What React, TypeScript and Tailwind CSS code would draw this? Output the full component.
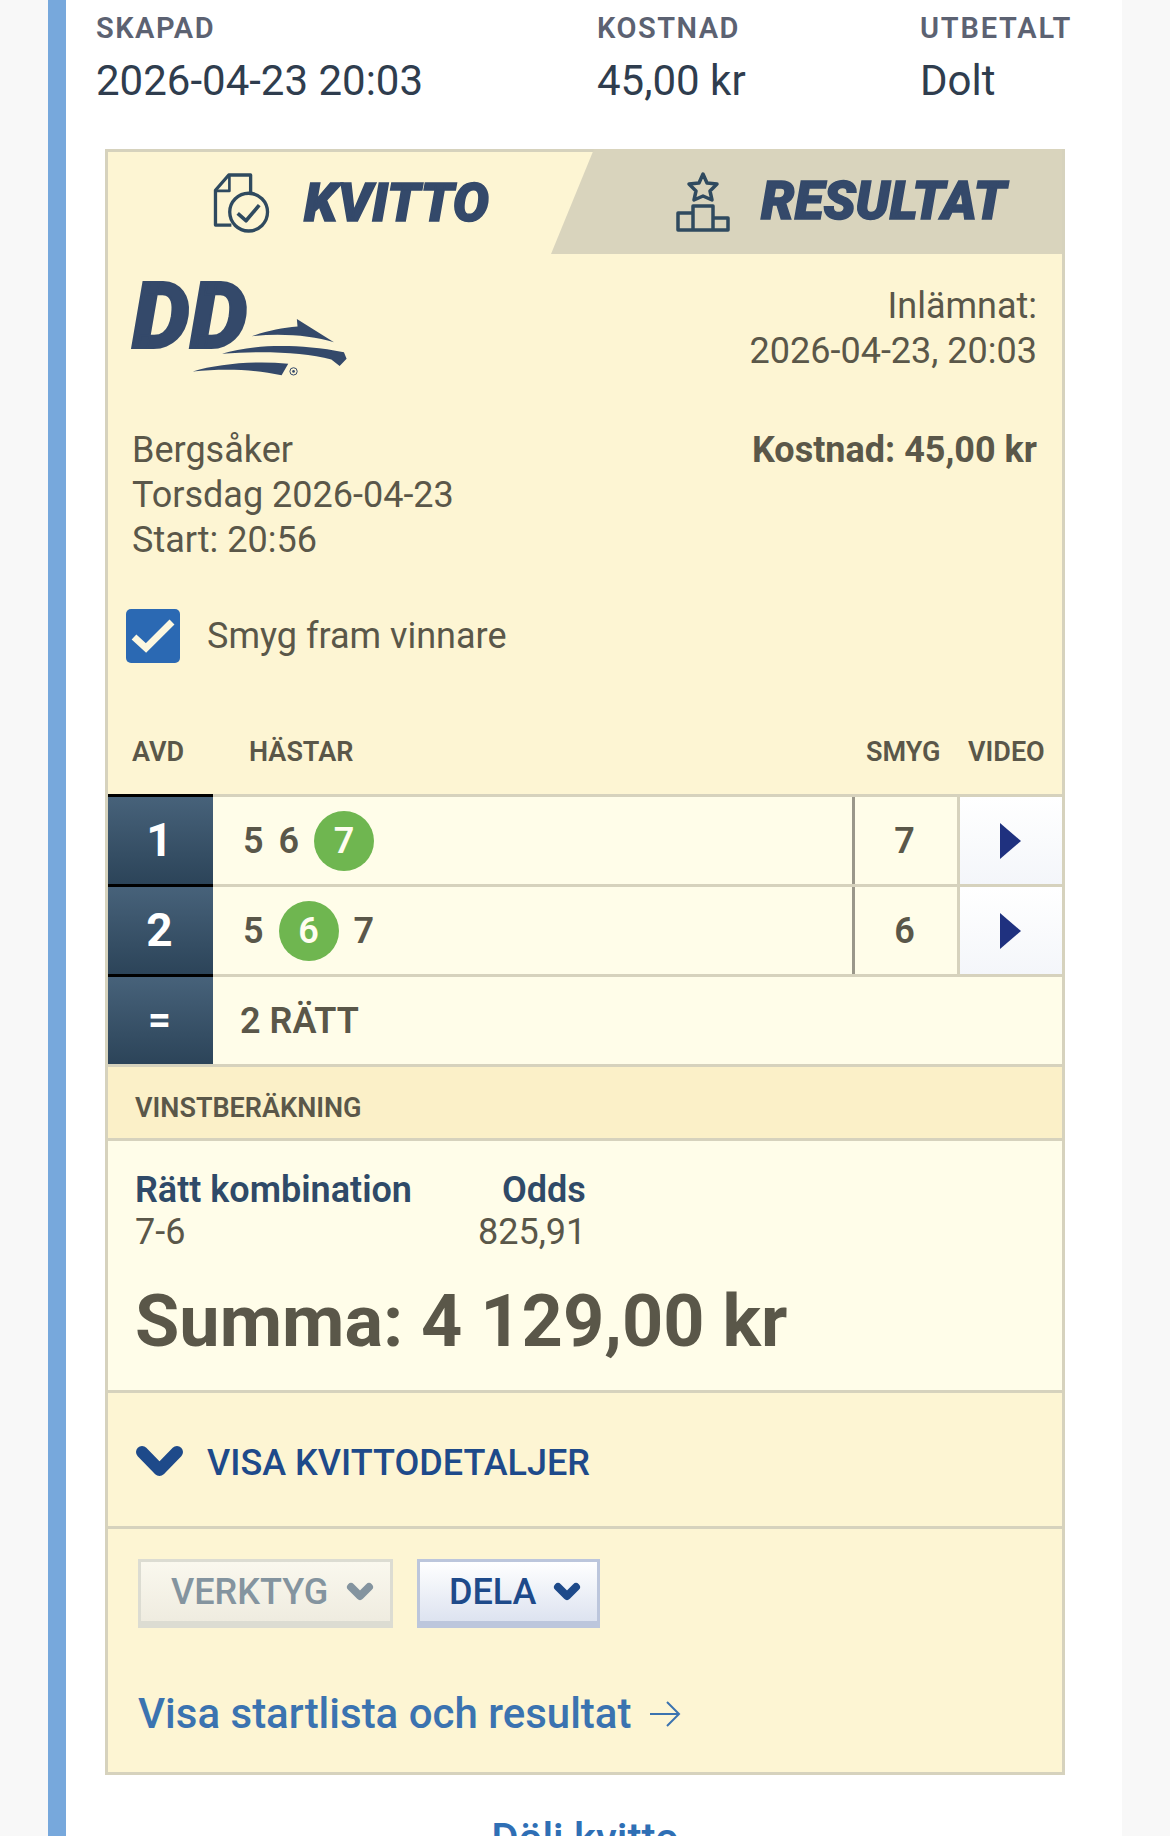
import React from 'react';

const line = 'border-[#d6d2bd]';

function Horses({ picks, winner }: { picks: number[]; winner: number }) {
  return (
    <div className="flex items-center gap-[15px] pl-[30px] text-[36px] font-semibold text-[#5a5749]">
      {picks.map((n) =>
        n === winner ? (
          <span key={n} className="flex h-[60px] w-[60px] items-center justify-center rounded-full bg-[#6fb650] text-[#fffdf0]">
            {n}
          </span>
        ) : (
          <span key={n}>{n}</span>
        ),
      )}
    </div>
  );
}

function PlayCell() {
  return (
    <div className="flex w-[105px] items-center justify-center border-l-[3px] border-[#d6d2bd] bg-gradient-to-b from-white to-[#f4f6fa]">
      <svg width="22" height="36" viewBox="0 0 22 36">
        <path d="M0 0 L21 18 L0 36 Z" fill="#1f317f" />
      </svg>
    </div>
  );
}

function AvdCell({ label, size }: { label: string; size: string }) {
  return (
    <div className={`flex w-[105px] items-center justify-center bg-gradient-to-b from-[#47627a] to-[#2c4459] pr-[2px] font-bold text-white ${size}`}>
      <span className="-mt-[1px]">{label}</span>
    </div>
  );
}

function LegRow({ avd, picks, winner, smyg }: { avd: string; picks: number[]; winner: number; smyg: number }) {
  return (
    <div className={`relative flex h-[90px] border-t-[3px] ${line} bg-[#fffde9]`}>
      <div className="absolute -top-[3px] left-0 h-[3px] w-[105px] bg-black" />
      <AvdCell label={avd} size="text-[46px]" />
      <div className="flex flex-1 items-center">
        <Horses picks={picks} winner={winner} />
      </div>
      <div className="flex w-[105px] items-center justify-center border-l-[3px] border-[#9a978a] pr-[3px] text-[36px] font-semibold text-[#5a5749]">
        {smyg}
      </div>
      <PlayCell />
    </div>
  );
}

export default function App() {
  return (
    <div className="h-[1836px] overflow-hidden bg-[#f8f8f8] pl-[48px] font-['Roboto',sans-serif]">
      <div className="h-full w-[1074px] border-l-[18px] border-[#77a8dc] bg-white">
        <div className="flex pl-[30px] pt-[11px] text-[#2f3d4e]">
          <div className="w-[501px]">
            <div className="text-[29px] font-semibold leading-[34px] tracking-[1.5px] text-[#5c6272]">SKAPAD</div>
            <div className="mt-[9px] text-[42px] leading-[54px]">2026-04-23 20:03</div>
          </div>
          <div className="w-[323px]">
            <div className="text-[29px] font-semibold leading-[34px] tracking-[1.5px] text-[#5c6272]">KOSTNAD</div>
            <div className="mt-[9px] text-[42px] leading-[54px]">45,00 kr</div>
          </div>
          <div>
            <div className="text-[29px] font-semibold leading-[34px] tracking-[1.8px] text-[#5c6272]">UTBETALT</div>
            <div className="mt-[9px] text-[42px] leading-[54px]">Dolt</div>
          </div>
        </div>

        <div className="ml-[39px] mt-[41px] w-[960px] border-[3px] border-[#d6d2bd] bg-[#fdf5d3]">
          {/* tabs */}
          <div className="relative flex h-[102px]">
            <div className="flex w-[425px] items-center justify-end gap-[32px] pr-[44px]">
              <svg width="60" height="63" viewBox="320 65 180 190" fill="none" stroke="#2f4a5f" strokeWidth="10" strokeLinejoin="round">
                <path d="M436 125 V74 H370 L330 120 V225 H378" />
                <path d="M372 74 V122 H330" strokeWidth="8" />
                <circle cx="430" cy="186" r="57" />
                <path d="M397 190 L422 212 L462 165" strokeWidth="11" />
              </svg>
              <span className="text-[54px] font-black italic leading-none text-[#34496a] [-webkit-text-stroke:1.5px_#34496a]">KVITTO</span>
            </div>
            <div className="absolute -top-[3px] right-0 flex h-[105px] w-[511px] items-center justify-end gap-[31px] bg-[#d9d4bd] pr-[56px] [clip-path:polygon(43px_0,100%_0,100%_100%,0_100%)]">
              <svg width="54" height="61" viewBox="0 0 54 61" fill="none" stroke="#2f4a5f" strokeWidth="3.5" strokeLinejoin="round">
                <path d="M27 3 L31 12 L41 13 L34 20 L36 29 L27 25 L18 29 L20 20 L13 13 L23 12 Z" />
                <path d="M2 42 H17 V59 H2 Z M17 35 H37 V59 H17 Z M37 47 H52 V59 H37 Z" />
              </svg>
              <span className="text-[53px] font-black italic leading-none text-[#34496a] [-webkit-text-stroke:1.5px_#34496a]">RESULTAT</span>
            </div>
          </div>

          {/* summary */}
          <div className="flex justify-between pl-[24px] pr-[25px] pt-[30px] text-[36px] leading-[45px] text-[#5a5749]">
            <div className="relative h-[110px] w-[240px]">
              <span className="absolute -top-[5px] left-0 text-[92px] font-black italic leading-[76px] text-[#34496a] [-webkit-text-stroke:2px_#34496a]">DD</span>
              <svg className="absolute left-[58px] top-[33px]" width="160" height="63" viewBox="255 504 480 190" fill="#34496a">
                <path d="M440 562 C490 545 530 537 578 533 L576 510 L688 580 C620 560 530 552 440 562 Z" />
                <path d="M350 615 C430 590 560 580 718 610 L726 630 L705 652 L680 632 C600 612 480 605 350 615 Z" />
                <path d="M262 668 C340 645 450 635 550 645 L530 680 C440 660 350 660 262 668 Z" />
                <circle cx="566" cy="668" r="11" fill="none" stroke="#34496a" strokeWidth="3" />
                <circle cx="566" cy="668" r="4" />
              </svg>
            </div>
            <div className="text-right">
              <div>Inlämnat:</div>
              <div>2026-04-23, 20:03</div>
            </div>
          </div>
          <div className="mt-[34px] flex justify-between pl-[24px] pr-[25px] text-[36px] leading-[45px] text-[#5a5749]">
            <div>
              <div>Bergsåker</div>
              <div>Torsdag 2026-04-23</div>
              <div>Start: 20:56</div>
            </div>
            <div className="font-bold">Kostnad: 45,00 kr</div>
          </div>

          <div className="mt-[46px] flex items-center gap-[27px] pl-[18px] text-[36px] text-[#5a5749]">
            <div className="flex h-[54px] w-[54px] items-center justify-center rounded-[5px] bg-[#2b69b3]">
              <svg width="44" height="34" viewBox="0 0 44 34" fill="none" stroke="#fdf8e0" strokeWidth="7">
                <path d="M3 18 L15 29 L41 3" />
              </svg>
            </div>
            <span>Smyg fram vinnare</span>
          </div>

          {/* table */}
          <div className="mt-[67px] flex h-[44px] items-center text-[27px] font-semibold text-[#5a5749]">
            <div className="w-[141px] pl-[24px]">AVD</div>
            <div className="flex-1">HÄSTAR</div>
            <div className="w-[102px]">SMYG</div>
            <div className="w-[94px]">VIDEO</div>
          </div>
          <div className="mt-[20px]">
            <LegRow avd="1" picks={[5, 6, 7]} winner={7} smyg={7} />
            <LegRow avd="2" picks={[5, 6, 7]} winner={6} smyg={6} />
            <div className={`relative flex h-[90px] border-t-[3px] ${line} bg-[#fffde9]`}>
              <div className="absolute -top-[3px] left-0 h-[3px] w-[105px] bg-black" />
              <AvdCell label="=" size="text-[40px]" />
              <div className="flex flex-1 items-center pl-[27px] text-[36px] font-semibold text-[#5a5749]">2 RÄTT</div>
            </div>
          </div>

          <div className={`flex h-[77px] items-center border-y-[3px] ${line} bg-[#fbf0c8] pl-[27px] pt-[12px] text-[27px] font-semibold text-[#5a5749]`}>
            VINSTBERÄKNING
          </div>

          <div className={`h-[252px] border-b-[3px] ${line} bg-[#fffde9] pl-[27px] pt-[27px]`}>
            <div className="flex text-[36px] font-semibold leading-[44px] text-[#2f4a68]">
              <div className="w-[367px]">Rätt kombination</div>
              <div>Odds</div>
            </div>
            <div className="flex text-[36px] leading-[40px] text-[#5a5749]">
              <div className="w-[343px]">7-6</div>
              <div>825,91</div>
            </div>
            <div className="mt-[28px] text-[72px] font-bold leading-[84px] text-[#5a5749]">Summa: 4 129,00 kr</div>
          </div>

          <div className={`flex h-[136px] items-center gap-[23px] border-b-[3px] ${line} pl-[27px] pt-[7px]`}>
            <svg className="-mt-[4px]" width="49" height="32" viewBox="0 0 49 32" fill="none" stroke="#1e4a8a" strokeWidth="12" strokeLinecap="round" strokeLinejoin="round">
              <path d="M7 7 L24.5 25 L42 7" />
            </svg>
            <span className="text-[36px] font-medium text-[#1e4a8a]">VISA KVITTODETALJER</span>
          </div>

          <div className="pl-[30px] pt-[30px]">
            <div className="flex gap-[24px]">
              <div className="flex h-[69px] w-[255px] items-center gap-[18px] border-[3px] border-b-[7px] border-[#dcdcd2] bg-gradient-to-b from-[#faf8ee] to-[#efece0] pl-[30px] text-[36px] font-medium text-[#84949f]">
                <span>VERKTYG</span>
                <svg width="28" height="20" viewBox="0 0 28 20" fill="none" stroke="#84949f" strokeWidth="8" strokeLinecap="round" strokeLinejoin="round">
                  <path d="M5 5 L14 14 L23 5" />
                </svg>
              </div>
              <div className="flex h-[69px] w-[183px] items-center gap-[16px] border-[3px] border-b-[7px] border-[#bcc6dc] bg-gradient-to-b from-white to-[#dde3f0] pl-[29px] text-[36px] font-medium text-[#1e4a8a]">
                <span>DELA</span>
                <svg width="28" height="20" viewBox="0 0 28 20" fill="none" stroke="#1e4a8a" strokeWidth="8" strokeLinecap="round" strokeLinejoin="round">
                  <path d="M5 5 L14 14 L23 5" />
                </svg>
              </div>
            </div>
            <div className="mt-[62px] flex items-center gap-[18px] pb-[34px] text-[42px] font-medium leading-[48px] text-[#3b73b0]">
              <span>Visa startlista och resultat</span>
              <svg width="32" height="28" viewBox="0 0 32 28" fill="none" stroke="#3b73b0" strokeWidth="2">
                <path d="M1 14 H30 M18 2 L30 14 L18 26" />
              </svg>
            </div>
          </div>
        </div>

        <div className="ml-[39px] mt-[32px] w-[960px] text-center text-[42px] font-medium text-[#2f6fb5]">Dölj kvitto</div>
      </div>
    </div>
  );
}
